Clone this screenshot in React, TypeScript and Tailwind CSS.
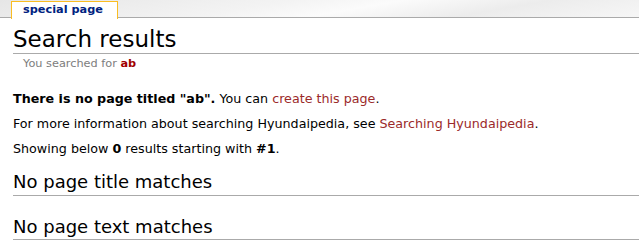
export default function App() {
  return (
    <div className="w-[639px] h-[246px] overflow-hidden bg-white text-black font-['DejaVu_Sans',sans-serif]">
      {/* tab strip */}
      <div className="h-[18px] border-b border-[#aaaaaa] bg-[linear-gradient(170deg,#e6e6e6_0%,#f3f3f3_40%,#fbfbfb_55%,#ececec_75%,#f6f6f6_100%)] flex items-start pl-[11px] pt-[1px]">
        <div className="h-[18px] w-[107px] bg-white border-t border-l border-r border-[#fabd23] flex items-start pl-[11px] pt-[1px]">
          <span className="text-[11.3px] leading-[13px] font-bold text-[#002280]">special page</span>
        </div>
      </div>

      <div className="pl-[13px] flex flex-col">
        <h1 className="mt-[8px] text-[23px] leading-[27px] border-b border-[#aaaaaa]">Search results</h1>
        <div className="mt-[3px] pl-[10px] text-[11.3px] leading-[14px] text-[#7d7d7d]">
          You searched for <b className="text-[#a00000]">ab</b>
        </div>

        <p className="mt-[18px] text-[12.7px] leading-[19px]">
          <b>There is no page titled "ab".</b> You can{" "}
          <span className="text-[#9b2a2a]">create this page</span>.
        </p>
        <p className="mt-[6px] text-[12.7px] leading-[19px]">
          For more information about searching Hyundaipedia, see{" "}
          <span className="text-[#9b2a2a]">Searching Hyundaipedia</span>.
        </p>
        <p className="mt-[6px] text-[12.7px] leading-[19px]">
          Showing below <b>0</b> results starting with <b>#1</b>.
        </p>

        <h2 className="mt-[13px] text-[18px] leading-[22px] pb-[2px] border-b border-[#aaaaaa]">No page title matches</h2>
        <h2 className="mt-[20px] text-[18px] leading-[22px] pb-[1px] border-b border-[#aaaaaa]">No page text matches</h2>
      </div>
    </div>
  );
}
